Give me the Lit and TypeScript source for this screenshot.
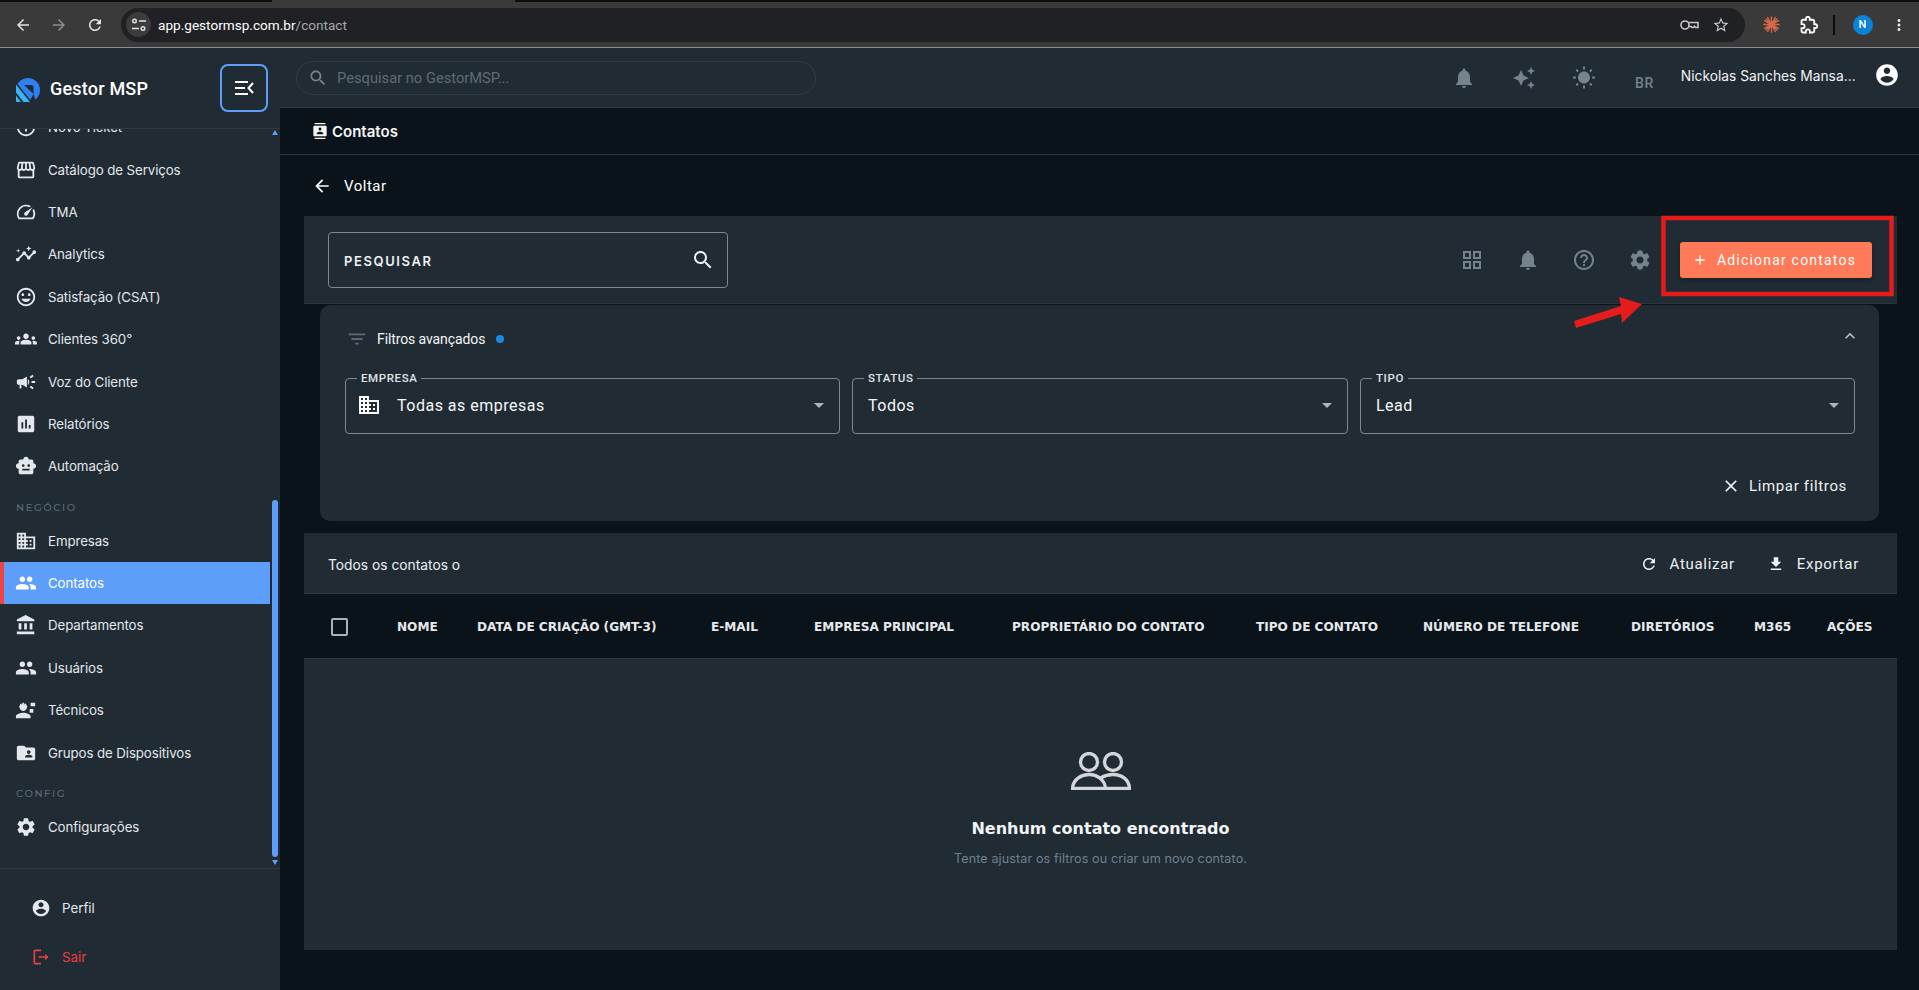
import { LitElement, html, css, svg } from "lit";
import { customElement } from "lit/decorators.js";

const P: Record<string, string> = {
  back: "M20 11H7.83l5.59-5.59L12 4l-8 8 8 8 1.41-1.41L7.83 13H20v-2z",
  search: "M15.5 14h-.79l-.28-.27C15.41 12.59 16 11.11 16 9.5 16 5.91 13.09 3 9.5 3S3 5.91 3 9.5 5.91 16 9.5 16c1.61 0 3.09-.59 4.23-1.57l.27.28v.79l5 4.99L20.49 19l-4.99-5zm-6 0C7.01 14 5 11.99 5 9.5S7.01 5 9.5 5 14 7.01 14 9.5 11.99 14 9.5 14z",
  bell: "M12 22c1.1 0 2-.9 2-2h-4c0 1.1.89 2 2 2zm6-6v-5c0-3.07-1.64-5.64-4.5-6.32V4c0-.83-.67-1.5-1.5-1.5s-1.5.67-1.5 1.5v.68C7.63 5.36 6 7.92 6 11v5l-2 2v1h16v-1l-2-2z",
  gear: "M19.14 12.94c.04-.3.06-.61.06-.94 0-.32-.02-.64-.07-.94l2.03-1.58c.18-.14.23-.41.12-.61l-1.92-3.32c-.12-.22-.37-.29-.59-.22l-2.39.96c-.5-.38-1.03-.7-1.62-.94l-.36-2.54c-.04-.24-.24-.41-.48-.41h-3.84c-.24 0-.43.17-.47.41l-.36 2.54c-.59.24-1.13.57-1.62.94l-2.39-.96c-.22-.08-.47 0-.59.22L2.74 8.87c-.12.21-.08.47.12.61l2.03 1.58c-.05.3-.09.63-.09.94s.02.64.07.94l-2.03 1.58c-.18.14-.23.41-.12.61l1.92 3.32c.12.22.37.29.59.22l2.39-.96c.5.38 1.03.7 1.62.94l.36 2.54c.05.24.24.41.48.41h3.84c.24 0 .44-.17.47-.41l.36-2.54c.59-.24 1.13-.56 1.62-.94l2.39.96c.22.08.47 0 .59-.22l1.92-3.32c.12-.22.07-.47-.12-.61l-2.01-1.58zM12 15.6c-1.98 0-3.6-1.62-3.6-3.6s1.62-3.6 3.6-3.6 3.6 1.62 3.6 3.6-1.62 3.6-3.6 3.6z",
  people: "M16 11c1.66 0 2.99-1.34 2.99-3S17.66 5 16 5c-1.66 0-3 1.34-3 3s1.34 3 3 3zm-8 0c1.66 0 2.99-1.34 2.99-3S9.66 5 8 5C6.34 5 5 6.34 5 8s1.34 3 3 3zm0 2c-2.33 0-7 1.17-7 3.5V19h14v-2.5c0-2.33-4.67-3.5-7-3.5zm8 0c-.29 0-.62.02-.97.05 1.16.84 1.97 1.97 1.97 3.45V19h6v-2.5c0-2.33-4.67-3.5-7-3.5z",
  business: "M12 7V3H2v18h20V7H12zM6 19H4v-2h2v2zm0-4H4v-2h2v2zm0-4H4V9h2v2zm0-4H4V5h2v2zm4 12H8v-2h2v2zm0-4H8v-2h2v2zm0-4H8V9h2v2zm0-4H8V5h2v2zm10 12h-8v-2h2v-2h-2v-2h2v-2h-2V9h8v10zm-2-8h-2v2h2v-2zm0 4h-2v2h2v-2z",
  bank: "M4 10v7h3v-7H4zm6 0v7h3v-7h-3zM2 22h19v-3H2v3zm14-12v7h3v-7h-3zm-4.5-9L2 6v2h19V6l-9.5-5z",
  account: "M12 2C6.48 2 2 6.48 2 12s4.48 10 10 10 10-4.48 10-10S17.52 2 12 2zm0 3c1.66 0 3 1.34 3 3s-1.34 3-3 3-3-1.34-3-3 1.34-3 3-3zm0 14.2c-2.5 0-4.71-1.28-6-3.22.03-1.99 4-3.08 6-3.08 1.99 0 5.97 1.09 6 3.08-1.29 1.94-3.5 3.22-6 3.22z",
  report: "M19 3H5c-1.1 0-2 .9-2 2v14c0 1.1.9 2 2 2h14c1.1 0 2-.9 2-2V5c0-1.1-.9-2-2-2zM9 17H7v-7h2v7zm4 0h-2V7h2v10zm4 0h-2v-4h2v4z",
  campaign: "M18 11v2h4v-2h-4zm-2 6.61c.96.71 2.21 1.65 3.2 2.39.4-.53.8-1.07 1.2-1.6-.99-.74-2.24-1.68-3.2-2.4-.4.54-.8 1.08-1.2 1.61zM20.4 5.6c-.4-.53-.8-1.07-1.2-1.6-.99.74-2.24 1.68-3.2 2.4.4.53.8 1.07 1.2 1.6.96-.72 2.21-1.65 3.2-2.4zM4 9c-1.1 0-2 .9-2 2v2c0 1.1.9 2 2 2h1v4h2v-4h1l5 3V6L8 9H4zm11.5 3c0-1.33-.58-2.53-1.5-3.35v6.69c.92-.81 1.5-2.01 1.5-3.34z",
  groups: "M12 12.75c1.63 0 3.07.39 4.24.9 1.08.48 1.76 1.56 1.76 2.73V18H6v-1.61c0-1.18.68-2.26 1.76-2.73 1.17-.52 2.61-.91 4.24-.91zM4 13c1.1 0 2-.9 2-2s-.9-2-2-2-2 .9-2 2 .9 2 2 2zm1.13 1.1c-.37-.06-.74-.1-1.13-.1-.99 0-1.93.21-2.78.58C.48 14.9 0 15.62 0 16.43V18h4.5v-1.61c0-.83.23-1.61.63-2.29zM20 13c1.1 0 2-.9 2-2s-.9-2-2-2-2 .9-2 2 .9 2 2 2zm4 3.43c0-.81-.48-1.53-1.22-1.85-.85-.37-1.79-.58-2.78-.58-.39 0-.76.04-1.13.1.4.68.63 1.46.63 2.29V18H24v-1.57zM12 6c1.66 0 3 1.34 3 3s-1.34 3-3 3-3-1.34-3-3 1.34-3 3-3z",
  store: "M21.9 8.89l-1.05-4.37c-.22-.9-1-1.52-1.91-1.52H5.05c-.9 0-1.69.63-1.9 1.52L2.1 8.89c-.24 1.02-.02 2.06.62 2.88.08.11.19.19.28.29V19c0 1.1.9 2 2 2h14c1.1 0 2-.9 2-2v-6.94c.09-.09.2-.18.28-.28.64-.82.87-1.87.62-2.89zm-2.99-3.9l1.05 4.37c.1.42.01.84-.25 1.17-.14.18-.44.47-.94.47-.61 0-1.14-.49-1.21-1.14L16.98 5l1.93-.01zM13 5h1.96l.54 4.52c.05.39-.07.78-.33 1.07-.22.26-.54.41-.95.41-.67 0-1.22-.59-1.22-1.31V5zM8.49 9.52L9.04 5H11v4.69c0 .72-.55 1.31-1.29 1.31-.34 0-.65-.15-.89-.41-.25-.29-.37-.68-.33-1.07zm-4.45-.16L5.05 5h1.97l-.58 4.86c-.08.65-.6 1.14-1.21 1.14-.49 0-.8-.29-.93-.47-.27-.32-.36-.75-.26-1.17zM5 19v-6.03c.08.01.15.03.23.03.87 0 1.66-.36 2.24-.95.6.6 1.4.95 2.31.95.87 0 1.65-.36 2.23-.93.59.57 1.39.93 2.29.93.84 0 1.64-.35 2.24-.95.58.59 1.37.95 2.24.95.08 0 .15-.02.23-.03V19H5z",
  speed: "M20.38 8.57l-1.23 1.85a8 8 0 0 1-.22 7.58H5.07A8 8 0 0 1 15.58 6.85l1.85-1.23A10 10 0 0 0 3.35 19a2 2 0 0 0 1.72 1h13.85a2 2 0 0 0 1.74-1 10 10 0 0 0-.27-10.44zm-9.79 6.84a2 2 0 0 0 2.83 0l5.66-8.49-8.49 5.66a2 2 0 0 0 0 2.83z",
  insights: "M21 8c-1.45 0-2.26 1.44-1.93 2.51l-3.55 3.56c-.3-.09-.74-.09-1.04 0l-2.55-2.55C12.27 10.45 11.46 9 10 9c-1.45 0-2.27 1.44-1.93 2.52l-4.56 4.55C2.44 15.74 1 16.55 1 18c0 1.1.9 2 2 2 1.45 0 2.26-1.44 1.93-2.51l4.55-4.56c.3.09.74.09 1.04 0l2.55 2.55C12.73 16.55 13.54 18 15 18c1.45 0 2.27-1.44 1.93-2.52l3.56-3.55c1.07.33 2.51-.48 2.51-1.93 0-1.1-.9-2-2-2zM15 9l.94-2.07L18 6l-2.06-.93L15 3l-.92 2.07L12 6l2.08.93zM3.5 11L4 9l2-.5L4 8l-.5-2L3 8l-2 .5L3 9z",
  mood: "M11.99 2C6.47 2 2 6.48 2 12s4.47 10 9.99 10C17.52 22 22 17.52 22 12S17.52 2 11.99 2zM12 20c-4.42 0-8-3.58-8-8s3.58-8 8-8 8 3.58 8 8-3.58 8-8 8zm3.5-9c.83 0 1.5-.67 1.5-1.5S16.33 8 15.5 8 14 8.67 14 9.5s.67 1.5 1.5 1.5zm-7 0c.83 0 1.5-.67 1.5-1.5S9.33 8 8.5 8 7 8.67 7 9.5 7.67 11 8.5 11zm3.5 6.5c2.33 0 4.31-1.46 5.11-3.5H6.89c.8 2.04 2.78 3.5 5.11 3.5z",
  toy: "M20 9V7c0-1.1-.9-2-2-2h-3c0-1.66-1.34-3-3-3S9 3.34 9 5H6c-1.1 0-2 .9-2 2v2c-1.66 0-3 1.34-3 3s1.34 3 3 3v4c0 1.1.9 2 2 2h12c1.1 0 2-.9 2-2v-4c1.66 0 3-1.34 3-3s-1.34-3-3-3zM7.5 11.5C7.5 10.67 8.17 10 9 10s1.5.67 1.5 1.5S9.83 13 9 13s-1.5-.67-1.5-1.5zM16 17H8v-2h8v2zm-1-4c-.83 0-1.5-.67-1.5-1.5S14.17 10 15 10s1.5.67 1.5 1.5S15.83 13 15 13z",
  folder: "M20 6h-8l-2-2H4c-1.1 0-1.99.9-1.99 2L2 18c0 1.1.9 2 2 2h16c1.1 0 2-.9 2-2V8c0-1.1-.9-2-2-2zm-5 3c1.1 0 2 .9 2 2s-.9 2-2 2-2-.9-2-2 .9-2 2-2zm4 8h-8v-1c0-1.33 2.67-2 4-2s4 .67 4 2v1z",
  engineer: "M9 15c-2.67 0-8 1.34-8 4v2h16v-2c0-2.66-5.33-4-8-4zM4.74 9H5c0 2.21 1.79 4 4 4s4-1.79 4-4h.26c.27 0 .49-.22.49-.49v-.02c0-.27-.22-.49-.49-.49H13c0-1.48-.81-2.75-2-3.45v.95c0 .28-.22.5-.5.5s-.5-.22-.5-.5V4.14C9.68 4.06 9.35 4 9 4s-.68.06-1 .14V5.5c0 .28-.22.5-.5.5S7 5.78 7 5.5v-.95C5.81 5.25 5 6.52 5 8h-.26c-.27 0-.49.22-.49.49v.03c0 .26.22.48.49.48zM17 4h5v4h-5zM16 11h4v4h-4z",
  help: "M11 18h2v-2h-2v2zm1-16C6.48 2 2 6.48 2 12s4.48 10 10 10 10-4.48 10-10S17.52 2 12 2zm0 18c-4.41 0-8-3.59-8-8s3.59-8 8-8 8 3.59 8 8-3.59 8-8 8zm0-14c-2.21 0-4 1.79-4 4h2c0-1.1.9-2 2-2s2 .9 2 2c0 2-3 1.75-3 5h2c0-2.25 3-2.5 3-5 0-2.21-1.79-4-4-4z",
  grid: "M3 3v8h8V3H3zm6 6H5V5h4v4zm-6 4v8h8v-8H3zm6 6H5v-4h4v4zm4-16v8h8V3h-8zm6 6h-4V5h4v4zm-6 4v8h8v-8h-8zm6 6h-4v-4h4v4z",
  spark: "M19 9l1.25-2.75L23 5l-2.75-1.25L19 1l-1.25 2.75L15 5l2.75 1.25L19 9zm-7.5.5L9 4 6.5 9.5 1 12l5.5 2.5L9 20l2.5-5.5L17 12l-5.5-2.5zM19 15l-1.25 2.75L15 19l2.75 1.25L19 23l1.25-2.75L23 19l-2.75-1.25L19 15z",
  sun: "M6.76 4.84l-1.8-1.79-1.41 1.41 1.79 1.79 1.42-1.41zM4 10.5H1v2h3v-2zm9-9.95h-2V3.5h2V.55zm7.45 3.91l-1.41-1.41-1.79 1.79 1.41 1.41 1.79-1.79zm-3.21 13.7l1.79 1.8 1.41-1.41-1.8-1.79-1.4 1.4zM20 10.5v2h3v-2h-3zm-8-5c-3.31 0-6 2.69-6 6s2.69 6 6 6 6-2.69 6-6-2.69-6-6-6zm-1 16.95h2V19.5h-2v2.95zm-7.45-3.91l1.41 1.41 1.79-1.8-1.41-1.41-1.79 1.8z",
  refresh: "M17.65 6.35C16.2 4.9 14.21 4 12 4c-4.42 0-7.99 3.58-7.99 8s3.57 8 7.99 8c3.73 0 6.84-2.55 7.73-6h-2.08c-.82 2.33-3.04 4-5.65 4-3.31 0-6-2.69-6-6s2.69-6 6-6c1.66 0 3.14.69 4.22 1.78L13 11h7V4l-2.35 2.35z",
  download: "M19 9h-4V3H9v6H5l7 7 7-7zM5 18v2h14v-2H5z",
  close: "M19 6.41L17.59 5 12 10.59 6.41 5 5 6.41 10.59 12 5 17.59 6.41 19 12 13.41 17.59 19 19 17.59 13.41 12z",
  add: "M19 13h-6v6h-2v-6H5v-2h6V5h2v6h6v2z",
  less: "M12 8l-6 6 1.41 1.41L12 10.83l4.59 4.58L18 14z",
  filter: "M10 18h4v-2h-4v2zM3 6v2h18V6H3zm3 7h12v-2H6v2z",
  contacts: "M20 0H4v2h16V0zM4 24h16v-2H4v2zM20 4H4c-1.1 0-2 .9-2 2v12c0 1.1.9 2 2 2h16c1.1 0 2-.9 2-2V6c0-1.1-.9-2-2-2zm-8 2.75c1.24 0 2.25 1.01 2.25 2.25s-1.01 2.25-2.25 2.25S9.75 10.24 9.75 9 10.76 6.75 12 6.75zM17 17H7v-1.5c0-1.67 3.33-2.5 5-2.5s5 .83 5 2.5V17z",
  logout: "M5 5h7V3H5c-1.1 0-2 .9-2 2v14c0 1.1.9 2 2 2h7v-2H5V5zm16 7l-4-4v3H9v2h8v3l4-4z",
  ticket: "M12 2C6.48 2 2 6.48 2 12s4.48 10 10 10 10-4.48 10-10S17.52 2 12 2zm0 18c-4.41 0-8-3.59-8-8s3.59-8 8-8 8 3.59 8 8-3.59 8-8 8zm1-13h-2v4H7v2h4v4h2v-4h4v-2h-4V7z",
  forward: "M4 11h12.17l-5.59-5.59L12 4l8 8-8 8-1.41-1.41L16.17 13H4v-2z",
  star: "M22 9.24l-7.19-.62L12 2 9.19 8.63 2 9.24l5.46 4.73L5.82 21 12 17.27 18.18 21l-1.63-7.03L22 9.24zM12 15.4l-3.76 2.27 1-4.28-3.32-2.88 4.38-.38L12 6.1l1.71 4.04 4.38.38-3.32 2.88 1 4.28L12 15.4z",
  dots: "M12 8c1.1 0 2-.9 2-2s-.9-2-2-2-2 .9-2 2 .9 2 2 2zm0 2c-1.1 0-2 .9-2 2s.9 2 2 2 2-.9 2-2-.9-2-2-2zm0 6c-1.1 0-2 .9-2 2s.9 2 2 2 2-.9 2-2-.9-2-2-2z",
};

const PUZZLE = "M20.5 11H19V7c0-1.1-.9-2-2-2h-4V3.5C13 2.12 11.88 1 10.5 1S8 2.12 8 3.5V5H4c-1.1 0-1.99.9-1.99 2v3.8H3.5c1.49 0 2.7 1.21 2.7 2.7s-1.21 2.7-2.7 2.7H2V20c0 1.1.9 2 2 2h3.8v-1.5c0-1.49 1.21-2.7 2.7-2.7s2.7 1.21 2.7 2.7V22H17c1.1 0 2-.9 2-2v-4h1.5c1.38 0 2.5-1.12 2.5-2.5S21.88 11 20.5 11z";

const ic = (name: string, size: number, cls = "") =>
  html`<svg class="ic ${cls}" width=${size} height=${size} viewBox="0 0 24 24" fill="currentColor"><path d=${P[name]}></path></svg>`;

type Row = { t: "item" | "label"; text: string; icon?: string; active?: boolean };
const NAV: Row[] = [
  { t: "item", text: "Novo Ticket", icon: "ticket" },
  { t: "item", text: "Catálogo de Serviços", icon: "store" },
  { t: "item", text: "TMA", icon: "speed" },
  { t: "item", text: "Analytics", icon: "insights" },
  { t: "item", text: "Satisfação (CSAT)", icon: "mood" },
  { t: "item", text: "Clientes 360°", icon: "groups" },
  { t: "item", text: "Voz do Cliente", icon: "campaign" },
  { t: "item", text: "Relatórios", icon: "report" },
  { t: "item", text: "Automação", icon: "toy" },
  { t: "label", text: "NEGÓCIO" },
  { t: "item", text: "Empresas", icon: "business" },
  { t: "item", text: "Contatos", icon: "people", active: true },
  { t: "item", text: "Departamentos", icon: "bank" },
  { t: "item", text: "Usuários", icon: "people" },
  { t: "item", text: "Técnicos", icon: "engineer" },
  { t: "item", text: "Grupos de Dispositivos", icon: "folder" },
  { t: "label", text: "CONFIG" },
  { t: "item", text: "Configurações", icon: "gear" },
];

const COLS = [
  "NOME", "DATA DE CRIAÇÃO (GMT-3)", "E-MAIL", "EMPRESA PRINCIPAL", "PROPRIETÁRIO DO CONTATO",
  "TIPO DE CONTATO", "NÚMERO DE TELEFONE", "DIRETÓRIOS", "M365", "AÇÕES",
];

const FIELDS = [
  { label: "EMPRESA", value: "Todas as empresas", icon: true },
  { label: "STATUS", value: "Todos", icon: false },
  { label: "TIPO", value: "Lead", icon: false },
];

@customElement("app-root")
export class AppRoot extends LitElement {
  static styles = css`
    :host { display: block; position: relative; width: 1919px; height: 990px; overflow: hidden; background: #0b131a; color: #fff; font-family: Inter, "Liberation Sans", sans-serif; }
    * { box-sizing: border-box; }
    .ic { display: block; flex: none; }

    .chrome { height: 48px; position: relative; background: #3a3a3a; border-top: 2px solid #0d0d0d; border-bottom: 1px solid #8b8d8e; display: flex; align-items: center; padding: 0 11px 0 5px; color: #e3e3e3; }
    .tabnub { position: absolute; left: 272px; top: -2px; width: 243px; height: 2px; background: #3a3a3a; }
    .navbtn { flex: none; width: 36px; display: flex; justify-content: center; }
    .navbtn.off { color: #8d8d8d; }
    .navbtn.last { margin-right: 9px; }
    .omni { flex: none; width: 1624px; height: 34px; margin-left: -1px; background: #202124; border-radius: 17px; display: flex; align-items: center; padding: 0 10px 0 5px; }
    .site { width: 25px; height: 25px; border-radius: 50%; background: #3c3c3c; display: flex; align-items: center; justify-content: center; margin-right: 7px; }
    .url { font: 13.6px Roboto, sans-serif; color: #fff; flex: 1; }
    .url span { color: #a6a6a6; }
    .omni-ic { display: flex; align-items: center; gap: 13px; margin-right: 5px; color: #c7c7c7; }
    .chrome-right { display: flex; align-items: center; flex: 1; padding-left: 18px; }
    .ext { width: 17px; height: 17px; color: #d9684a; margin-right: 20px; flex: none; }
    .puzzle { margin-right: 15px; color: #fff; }
    .vsep { width: 1.5px; height: 20px; background: #0a0a0a; margin-right: 18px; flex: none; }
    .avatar { width: 20px; height: 20px; flex: none; border-radius: 50%; background: #0a84d6; color: #fff; font: 500 11px Roboto, sans-serif; display: flex; align-items: center; justify-content: center; margin-right: 17px; }

    .shell { display: flex; height: 942px; }
    .side { width: 280px; flex: none; background: #202b33; display: flex; flex-direction: column; position: relative; }
    .brand { height: 81px; flex: none; border-bottom: 1px solid #2d3943; display: flex; align-items: center; padding: 0 12px 0 16px; }
    .logo { margin-right: 10px; flex: none; margin-top: 3px; }
    .brand-name { font: 500 18px Roboto, sans-serif; color: #fff; flex: 1; letter-spacing: .2px; }
    .toggle { width: 48px; height: 48px; border: 2px solid #5c9efa; border-radius: 8px; display: flex; align-items: center; justify-content: center; color: #fff; margin-top: -1px; }
    .nav { height: 740px; overflow: hidden; flex: none; border-bottom: 1px solid #2d3943; position: relative; }
    .nav-in { margin-top: -23px; }
    .item { height: 42.4px; width: 270px; display: flex; align-items: center; padding-left: 15px; color: #e4e8ec; font-size: 13.3px; letter-spacing: -.1px; }
    .item .ic { margin-right: 11px; }
    .item.active { background: #5c9efa; border-left: 4px solid #ef4444; padding-left: 11px; color: #fff; }
    .sect { height: 32px; padding: 13.5px 0 0 16px; font: 500 10px Montserrat, Inter, sans-serif; letter-spacing: 1.6px; color: #5d6a75; }
    .bar { position: absolute; right: 2px; top: 371px; width: 6px; height: 357px; background: #5c9efa; border-radius: 3px; }
    .arrow-up { position: absolute; right: 2px; top: 1px; width: 0; height: 0; border: 3px solid transparent; border-bottom: 5px solid #5c9efa; border-top: 0; }
    .arrow-dn { position: absolute; right: 2px; bottom: 3px; width: 0; height: 0; border: 3px solid transparent; border-top: 5px solid #5c9efa; border-bottom: 0; }
    .foot { flex: 1; padding-top: 15px; }
    .fitem { height: 48.5px; display: flex; align-items: center; padding-left: 31px; font-size: 13.3px; color: #e4e8ec; }
    .fitem .ic { margin-right: 11px; }
    .fitem.red { color: #ef3e42; }

    .main { flex: 1; min-width: 0; display: flex; flex-direction: column; }
    .top { height: 60px; flex: none; background: #202b33; border-bottom: 1px solid #2f3b45; display: flex; align-items: center; padding: 0 0 0 16px; }
    .tsearch { width: 520px; height: 34px; border: 1px solid #2f3b45; border-radius: 17px; display: flex; align-items: center; padding-left: 11px; color: #78848e; font: 14.7px Roboto, sans-serif; margin-top: 1px; flex: none; }
    .tsearch .ic { margin-right: 9px; }
    .tsearch span { color: #5f6b75; }
    .ticons { display: flex; align-items: center; margin-left: 636px; color: #76838e; gap: 36px; }
    .br { font: 500 14px Roboto, sans-serif; color: #76838e; margin-left: 39px; margin-top: 11px; letter-spacing: .6px; }
    .uname { font-size: 13.8px; color: #f1f3f5; width: 177px; flex: none; margin-left: 27px; white-space: nowrap; overflow: hidden; text-overflow: ellipsis; margin-top: -3px; }
    .uicon { margin-left: 16px; color: #fff; margin-top: -6px; }

    .crumb { height: 47px; flex: none; border-bottom: 1px solid #2a353e; display: flex; align-items: center; padding-left: 32px; gap: 4px; font-size: 15px; font-weight: 600; color: #f4f6f8; }
    .content { flex: 1; display: flex; flex-direction: column; padding: 0 22px 0 24px; }
    .voltar { height: 61px; flex: none; display: flex; align-items: center; gap: 12px; font: 15px Roboto, sans-serif; letter-spacing: .5px; padding-left: 8px; color: #fff; }
    .panel { height: 88px; flex: none; background: #202b33; border-bottom: 1px solid #2a353e; display: flex; align-items: center; padding: 0 25px 0 24px; }
    .pesq { width: 400px; height: 56px; border: 1px solid #7e8890; border-radius: 4px; display: flex; align-items: center; justify-content: space-between; padding: 0 12px 0 15px; font-size: 13px; font-weight: 600; letter-spacing: 1.6px; color: #eef1f3; }
    .pesq span { margin-top: 2px; }
    .picons { margin-left: auto; display: flex; align-items: center; gap: 32px; color: #76838e; }
    .add { margin-left: 28px; width: 192px; height: 36px; background: #ff7a59; border-radius: 3px; display: flex; align-items: center; justify-content: center; gap: 9px; padding-right: 4px; font: 400 14px Roboto, sans-serif; letter-spacing: 1.2px; color: #fff; box-shadow: 0 2px 4px rgba(0,0,0,.25); }

    .filters { height: 216px; flex: none; margin: 1px 18px 0 16px; background: #202b33; border-radius: 10px; padding: 0 24px 0 25px; display: flex; flex-direction: column; }
    .fhead { height: 67px; flex: none; display: flex; align-items: center; font: 14px Roboto, sans-serif; color: #f4f6f8; letter-spacing: -.1px; padding-left: 1px; }
    .fhead .f { color: #5d6a75; margin-right: 9px; }
    .dot { width: 8px; height: 8px; background: #1e88e5; border-radius: 50%; margin-left: 11px; }
    .fhead .up { margin-left: auto; color: #b9c0c6; margin-right: -5px; margin-top: -6px; }
    .fields { display: grid; grid-template-columns: 495px 496px 495px; gap: 12px; margin-top: 6px; }
    .field { height: 56px; border: 1px solid #7e8890; border-radius: 4px; display: flex; align-items: center; padding: 0 15px 2px 15px; font: 16px Roboto, sans-serif; color: #f6f7f8; position: relative; letter-spacing: .5px; }
    .flabel { position: absolute; top: -7px; left: 11px; padding: 0 4px; background: #202b33; font: 500 11.5px/13px Roboto, sans-serif; letter-spacing: .6px; color: #e0e4e7; }
    .field .b { margin-right: 16.5px; color: #fff; margin-left: -4.5px; }
    .caret { margin-left: auto; width: 0; height: 0; border: 5px solid transparent; border-top: 5px solid #aeb5ba; border-bottom: 0; }
    .clear { display: flex; justify-content: flex-end; align-items: center; gap: 8px; font: 15px Roboto, sans-serif; letter-spacing: .65px; color: #eef1f3; margin-top: 42px; padding-right: 8px; }

    .tbar { margin-top: 12px; height: 61px; flex: none; background: #202b33; border-bottom: 1px solid #2f3b45; display: flex; align-items: center; padding: 0 38px 0 24px; font-size: 13.8px; color: #eef1f3; }
    .tt { margin-top: 4px; }
    .tact { display: flex; align-items: center; gap: 12px; font: 15px Roboto, sans-serif; letter-spacing: .7px; margin-top: 2px; }
    .tact.first { margin-left: auto; }
    .tact + .tact { margin-left: 32px; }
    .thead { height: 65px; flex: none; border-bottom: 1px solid #2a353e; display: grid; grid-template-columns: 93px 80px 234px 103px 198px 244px 167px 208px 123px 73px 1fr; align-items: center; font: 700 12.1px "DejaVu Sans", sans-serif; color: #e6e9ec; white-space: nowrap; }
    .thead > div { margin-top: 1px; }
    .check { width: 17px; height: 18px; border: 2px solid #aab1b7; border-radius: 2px; margin-left: 27px; }
    .empty { height: 291px; flex: none; background: #202b33; display: flex; flex-direction: column; align-items: center; padding-top: 93px; }
    .empty h3 { margin: 30px 0 0; font: 700 16px/18px "DejaVu Sans", sans-serif; color: #f2f5f7; }
    .empty p { margin: 13px 0 0; font-size: 12.6px; line-height: 16px; color: #6f8090; letter-spacing: .1px; }

    .overlay { position: absolute; left: 0; top: 0; pointer-events: none; }
  `;

  render() {
    return html`
      <div class="chrome">
        <div class="tabnub"></div>
        <div class="navbtn">${ic("back", 18)}</div>
        <div class="navbtn off">${ic("forward", 18)}</div>
        <div class="navbtn last">${ic("refresh", 18)}</div>
        <div class="omni">
          <div class="site">
            <svg width="16" height="16" viewBox="0 0 16 16" fill="none" stroke="#e3e3e3" stroke-width="1.4">
              <circle cx="3.5" cy="4" r="1.8"></circle><path d="M8 4h7M1 11.500h7"></path><circle cx="12" cy="11.500" r="1.8"></circle>
            </svg>
          </div>
          <div class="url">app.gestormsp.com.br<span>/contact</span></div>
          <div class="omni-ic">
            <svg width="19" height="14" viewBox="0 0 19 14" fill="none" stroke="currentColor" stroke-width="1.600">
              <circle cx="5" cy="7" r="4"></circle><path d="M9 4.500h9v5h-2.500l-1-1.200-1.200 1.200h-1.300l-1-1H9"></path>
            </svg>
            ${ic("star", 18)}
          </div>
        </div>
        <div class="chrome-right">
          <svg class="ext" viewBox="0 0 20 20" stroke="currentColor" stroke-width="1.6" stroke-linecap="round">
            <path d="M10 1v18M1 10h18M3.6 3.6l12.8 12.8M16.4 3.6L3.6 16.4M5.5 1.8l9 16.4M14.5 1.8l-9 16.4M1.8 5.5l16.4 9M18.2 5.5l-16.4 9"></path>
          </svg>
          <svg class="ic puzzle" width="18" height="18" viewBox="0 0 24 24" fill="none" stroke="currentColor" stroke-width="2.4"><path d=${PUZZLE}></path></svg>
          <div class="vsep"></div>
          <div class="avatar">N</div>
          ${ic("dots", 18)}
        </div>
      </div>
      <div class="shell">
        <aside class="side">
          <div class="brand">
            <svg class="logo" width="24" height="24" viewBox="0 0 24 24">
              <circle cx="12" cy="12" r="12" fill="#2f80f0"></circle>
              <path d="M8 7h7a2.500 2.500 0 0 1 2.500 2.500V16z" fill="#202b33"></path>
              <path d="M17.500 16L20 24H13z" fill="#202b33"></path>
              <path d="M-1 3l17 21H0z" fill="#202b33"></path>
              <path d="M0 6.500L14 24H7.500L0 14.500z" fill="#38b6f1"></path>
              <path d="M0 17.500L5 24H1a1 1 0 0 1-1-1z" fill="#38b6f1"></path>
            </svg>
            <div class="brand-name">Gestor MSP</div>
            <div class="toggle">
              <svg width="24" height="24" viewBox="0 0 24 24" fill="none" stroke="currentColor" stroke-width="2"><path d="M3 6h13M3 12h10M3 18h13M21 7l-4.500 5 4.500 5"></path></svg>
            </div>
          </div>
          <div class="nav">
            <div class="nav-in">
              ${NAV.map((r) =>
                r.t === "label"
                  ? html`<div class="sect">${r.text}</div>`
                  : html`<div class="item ${r.active ? "active" : ""}">${ic(r.icon!, 22)}<span>${r.text}</span></div>`
              )}
            </div>
            <div class="arrow-up"></div>
            <div class="bar"></div>
            <div class="arrow-dn"></div>
          </div>
          <div class="foot">
            <div class="fitem">${ic("account", 20)}<span>Perfil</span></div>
            <div class="fitem red">${ic("logout", 20)}<span>Sair</span></div>
          </div>
        </aside>
        <div class="main">
          <div class="top">
            <div class="tsearch">${ic("search", 20)}<span>Pesquisar no GestorMSP...</span></div>
            <div class="ticons">${ic("bell", 24)}${ic("spark", 24)}${ic("sun", 24)}</div>
            <div class="br">BR</div>
            <div class="uname">Nickolas Sanches Mansano</div>
            <div class="uicon">${ic("account", 26)}</div>
          </div>
          <div class="crumb">${ic("contacts", 16)}<span>Contatos</span></div>
          <div class="content">
            <div class="voltar">${ic("back", 20)}<span>Voltar</span></div>
            <div class="panel">
              <div class="pesq"><span>PESQUISAR</span>${ic("search", 24)}</div>
              <div class="picons">${ic("grid", 24)}${ic("bell", 24)}${ic("help", 24)}${ic("gear", 24)}</div>
              <div class="add">${ic("add", 16)}<span>Adicionar contatos</span></div>
            </div>
            <div class="filters">
              <div class="fhead">
                <span class="f">${ic("filter", 22)}</span><span>Filtros avançados</span><span class="dot"></span>
                <span class="up">${ic("less", 20)}</span>
              </div>
              <div class="fields">
                ${FIELDS.map(
                  (f) => html`<div class="field">
                    <span class="flabel">${f.label}</span>
                    ${f.icon ? html`<span class="b">${ic("business", 24)}</span>` : ""}
                    <span>${f.value}</span><span class="caret"></span>
                  </div>`
                )}
              </div>
              <div class="clear">${ic("close", 20)}<span>Limpar filtros</span></div>
            </div>
            <div class="tbar">
              <span class="tt">Todos os contatos o</span>
              <div class="tact first">${ic("refresh", 18)}<span>Atualizar</span></div>
              <div class="tact">${ic("download", 18)}<span>Exportar</span></div>
            </div>
            <div class="thead">
              <div><div class="check"></div></div>
              ${COLS.map((c) => html`<div>${c}</div>`)}
            </div>
            <div class="empty">
              <svg width="60" height="38" viewBox="0 0 60 38" fill="none" stroke="#d3d7dc" stroke-width="3.3">
                <circle cx="18" cy="10" r="8.500"></circle><circle cx="42" cy="10" r="8.500"></circle>
                <path d="M1.500 36.500C2 27 11 22.500 18 22.500C26 22.500 34 28 34.500 36.500ZM34.500 36.500H58.500C58 27 50 22.500 42 22.500C37 22.500 33 24 29.500 26"></path>
              </svg>
              <h3>Nenhum contato encontrado</h3>
              <p>Tente ajustar os filtros ou criar um novo contato.</p>
            </div>
          </div>
        </div>
      </div>
      <svg class="overlay" width="1919" height="990" fill="none">
        ${svg`<rect x="1663.5" y="218" width="228" height="76" stroke="#e51c1c" stroke-width="4.5"></rect>
        <path d="M1574 321l47-15-2-9 23 7-20 19-1-9-45 14z" fill="#e51c1c"></path>`}
      </svg>
    `;
  }
}
